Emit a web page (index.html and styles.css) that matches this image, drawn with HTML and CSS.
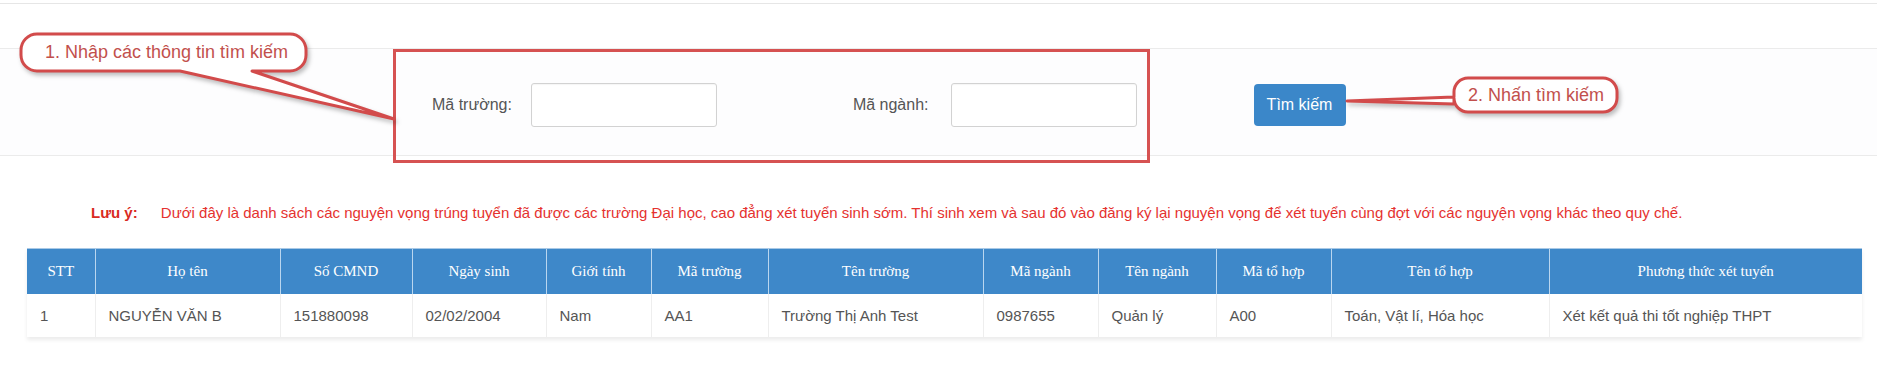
FILE: index.html
```html
<!DOCTYPE html>
<html lang="vi">
<head>
  <meta charset="UTF-8" />
  <title>Tra cứu nguyện vọng trúng tuyển</title>
  <link rel="stylesheet" href="styles.css">
</head>
<body>
  <div class="topbar"></div>

  <div class="search-panel">
    <form class="search-form">
      <div class="field">
        <label for="ma-truong">Mã trường:</label>
        <input type="text" id="ma-truong">
      </div>
      <div class="field field-second">
        <label for="ma-nganh">Mã ngành:</label>
        <input type="text" id="ma-nganh">
      </div>
      <button type="button" class="btn-search">Tìm kiếm</button>
    </form>
  </div>

  <div class="notice">
    <span class="notice-label">Lưu ý:</span>
    Dưới đây là danh sách các nguyện vọng trúng tuyển đã được các trường Đại học, cao đẳng xét tuyển sinh sớm. Thí sinh xem và sau đó vào đăng ký lại nguyện vọng để xét tuyển cùng đợt với các nguyện vọng khác theo quy chế.
  </div>

  <table class="result-table">
    <colgroup>
      <col><col><col><col><col><col><col><col><col><col><col><col>
    </colgroup>
    <thead>
      <tr>
        <th>STT</th>
        <th>Họ tên</th>
        <th>Số CMND</th>
        <th>Ngày sinh</th>
        <th>Giới tính</th>
        <th>Mã trường</th>
        <th>Tên trường</th>
        <th>Mã ngành</th>
        <th>Tên ngành</th>
        <th>Mã tổ hợp</th>
        <th>Tên tổ hợp</th>
        <th>Phương thức xét tuyển</th>
      </tr>
    </thead>
    <tbody>
      <tr>
        <td>1</td>
        <td>NGUYỄN VĂN B</td>
        <td>151880098</td>
        <td>02/02/2004</td>
        <td>Nam</td>
        <td>AA1</td>
        <td>Trường Thị Anh Test</td>
        <td>0987655</td>
        <td>Quản lý</td>
        <td>A00</td>
        <td>Toán, Vật lí, Hóa học</td>
        <td>Xét kết quả thi tốt nghiệp THPT</td>
      </tr>
    </tbody>
  </table>

  <!-- Annotations drawn over the screenshot -->
  <div class="mark-box"></div>

  <svg class="callouts" width="1877" height="371" viewBox="0 0 1877 371">
    <path d="M37 34 H290 A16 16 0 0 1 306 50 V55 A16 16 0 0 1 290 71 H252 L394 119 L180 71 H37 A16 16 0 0 1 21 55 V50 A16 16 0 0 1 37 34 Z" />
    <path d="M1468 78 H1603 A14 14 0 0 1 1617 92 V98 A14 14 0 0 1 1603 112 H1468 A14 14 0 0 1 1454 98 V104 L1347 101 L1454 97 V92 A14 14 0 0 1 1468 78 Z" />
  </svg>
  <div class="callout-text callout-one">1. Nhập các thông tin tìm kiếm</div>
  <div class="callout-text callout-two">2. Nhấn tìm kiếm</div>
</body>
</html>
```

FILE: styles.css
```css
body {
  margin: 0;
  font-family: 'Liberation Sans', Arial, sans-serif;
  background-color: #ffffff;
  color: #555555;
  position: relative;
  width: 1877px;
  height: 371px;
  overflow: hidden;
}

.topbar {
  height: 3px;
  border-bottom: 1px solid #e6e6e6;
}

/* Search panel */
.search-panel {
  margin-top: 44px;
  border-top: 1px solid #ebebeb;
  border-bottom: 1px solid #ebebeb;
  background-color: #fdfdfe;
  padding: 34px 0 28px;
}

.search-form {
  display: flex;
  align-items: center;
  padding-left: 432px;
}

.field {
  display: flex;
  align-items: center;
  gap: 19px;
}

.field label {
  font-size: 16px;
  color: #555555;
}

.field input {
  width: 186px;
  height: 44px;
  box-sizing: border-box;
  border: 1px solid #d2d2d2;
  border-radius: 3px;
  background: #ffffff;
  box-shadow: inset 0 1px 1px rgba(0, 0, 0, 0.04);
}

.field-second {
  margin-left: 136px;
  gap: 22px;
}

.btn-search {
  margin-left: 117px;
  width: 92px;
  height: 42px;
  border: none;
  border-radius: 4px;
  background-color: #3b87c9;
  color: #ffffff;
  font-family: 'Liberation Sans', Arial, sans-serif;
  font-size: 16px;
  cursor: pointer;
}

/* Notice */
.notice {
  margin-top: 47px;
  padding-left: 91px;
  font-size: 15px;
  line-height: 20px;
  color: #e5322f;
}

.notice-label {
  font-weight: 700;
  color: #d92a22;
  margin-right: 19px;
}

/* Result table */
.result-table {
  margin: 25px 0 0 27px;
  width: 1835px;
  table-layout: fixed;
  border-collapse: collapse;
  box-shadow: 0 3px 4px rgba(0, 0, 0, 0.08);
}

.result-table col:nth-child(1) { width: 68px; }
.result-table col:nth-child(2) { width: 185px; }
.result-table col:nth-child(3) { width: 132px; }
.result-table col:nth-child(4) { width: 134px; }
.result-table col:nth-child(5) { width: 105px; }
.result-table col:nth-child(6) { width: 117px; }
.result-table col:nth-child(7) { width: 215px; }
.result-table col:nth-child(8) { width: 115px; }
.result-table col:nth-child(9) { width: 118px; }
.result-table col:nth-child(10) { width: 115px; }
.result-table col:nth-child(11) { width: 218px; }
.result-table col:nth-child(12) { width: 313px; }

.result-table th {
  height: 45px;
  padding: 0 6px;
  background-color: #3e88c9;
  border-top: 1px solid #a9c9e6;
  border-left: 1px solid #b9d6ef;
  color: #ffffff;
  font-family: 'Liberation Serif', 'Times New Roman', serif;
  font-size: 15px;
  font-weight: 400;
  text-align: center;
}

.result-table th:first-child {
  border-left: none;
}

.result-table td {
  height: 43px;
  padding: 0 13px;
  background-color: #ffffff;
  border-left: 1px solid #eeeeee;
  font-size: 15px;
  color: #555555;
  white-space: nowrap;
}

.result-table td:first-child {
  border-left: none;
}

/* Screenshot annotations */
.mark-box {
  position: absolute;
  left: 393px;
  top: 49px;
  width: 751px;
  height: 108px;
  border: 3px solid #d65252;
}

.callouts {
  position: absolute;
  left: 0;
  top: 0;
  pointer-events: none;
  filter: drop-shadow(2px 3px 2px rgba(0, 0, 0, 0.25));
}

.callouts path {
  fill: #ffffff;
  stroke: #d24b4b;
  stroke-width: 3;
  stroke-linejoin: round;
}

.callout-text {
  position: absolute;
  font-size: 18px;
  line-height: 22px;
  color: #c2504d;
  white-space: nowrap;
}

.callout-one {
  left: 45px;
  top: 41px;
}

.callout-two {
  left: 1468px;
  top: 84px;
}
```
